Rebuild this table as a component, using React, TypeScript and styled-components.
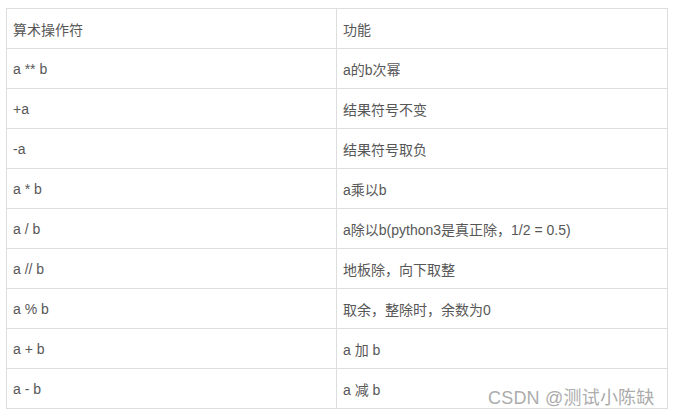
import React from 'react';
import styled, { createGlobalStyle } from 'styled-components';

/**
 * Page reset.
 */
const GlobalStyle = createGlobalStyle`
  body {
    margin: 0;
    background: #ffffff;
    font-family: "Liberation Sans", "Noto Sans CJK SC", sans-serif;
  }
`;

/**
 * Page holding the table and the watermark.
 */
const Page = styled.div`
  position: relative;
  width: 675px;
  height: 416px;
  padding: 8px 0 0 6px;
  box-sizing: border-box;
`;

const Table = styled.table`
  border-collapse: collapse;
  width: 661px;
  table-layout: fixed;
  color: #575757;
  font-size: 14px;
`;

const Row = styled.tr`
  height: 40px;
`;

const Cell = styled.td`
  border: 1px solid #dddddd;
  padding: 0 6px;
  vertical-align: middle;
  white-space: nowrap;
`;

/**
 * CSDN watermark in the bottom right corner.
 */
const Watermark = styled.div`
  position: absolute;
  left: 488px;
  top: 383px;
  font-size: 18px;
  color: #acacac;
  letter-spacing: 0.2px;
  text-shadow: 0 0 1px #ffffff;
`;

const rows: [string, string][] = [
  ['算术操作符', '功能'],
  ['a ** b', 'a的b次幂'],
  ['+a', '结果符号不变'],
  ['-a', '结果符号取负'],
  ['a * b', 'a乘以b'],
  ['a / b', 'a除以b(python3是真正除，1/2 = 0.5)'],
  ['a // b', '地板除，向下取整'],
  ['a % b', '取余，整除时，余数为0'],
  ['a + b', 'a 加 b'],
  ['a - b', 'a 减 b'],
];

const App: React.FC = () => {
  return (
    <Page>
      <GlobalStyle />
      <Table>
        <colgroup>
          <col style={{ width: 330 }} />
          <col style={{ width: 331 }} />
        </colgroup>
        <tbody>
          {rows.map(([op, desc]) => (
            <Row key={op}>
              <Cell>{op}</Cell>
              <Cell>{desc}</Cell>
            </Row>
          ))}
        </tbody>
      </Table>
      <Watermark>CSDN @测试小陈缺</Watermark>
    </Page>
  );
};

export default App;
